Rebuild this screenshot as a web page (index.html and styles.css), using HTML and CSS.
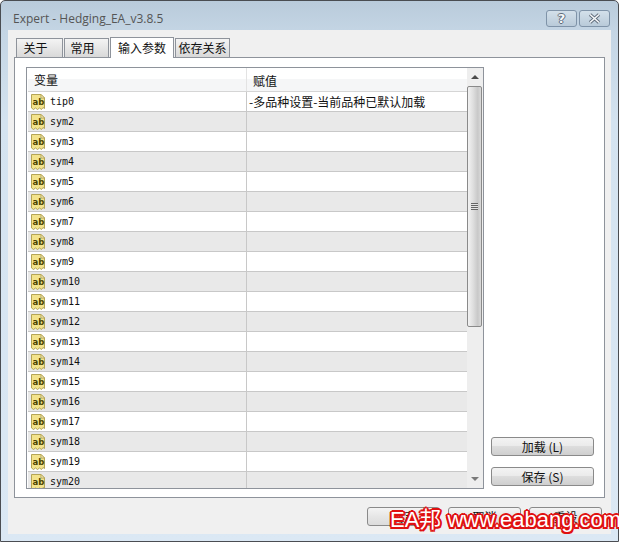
FILE: index.html
```html
<!DOCTYPE html>
<html lang="zh-CN">
<head>
    <meta charset="UTF-8">
    <meta name="viewport" content="width=device-width, initial-scale=1.0">
    <title>Expert - Hedging_EA_v3.8.5</title>
    <link rel="stylesheet" href="styles.css">
</head>
<body>
    <svg class="defs" width="0" height="0">
        <symbol id="ab-icon" viewBox="0 0 16 18">
            <path d="M1.5 1.5H11L14.5 5V15.5L13 14.5L11.5 16.5L9.5 15L7.5 16.5L5.5 15L3.5 16.5L1.5 15Z" fill="#f3e38c" stroke="#b5a556"/>
            <path d="M11 1.5V5H14.5Z" fill="#fdf8d8" stroke="#b5a556"/>
            <text x="2.6" y="12" class="ab-text">ab</text>
        </symbol>
    </svg>

    <div class="window">
        <div class="titlebar">
            <span class="title">Expert - Hedging_EA_v3.8.5</span>
            <div class="caption-buttons">
                <div class="caption-btn"><span class="glyph">?</span></div>
                <div class="caption-btn">
                    <svg width="13" height="11" viewBox="0 0 13 11">
                        <path d="M2 1.5L11 9.5M11 1.5L2 9.5" fill="none" stroke="#5f6b7a" stroke-width="3.4"/>
                        <path d="M2 1.5L11 9.5M11 1.5L2 9.5" fill="none" stroke="#f6f8fa" stroke-width="1.6"/>
                    </svg>
                </div>
            </div>
        </div>

        <div class="client">
            <div class="tabs">
                <div class="tab tab-about">关于</div>
                <div class="tab tab-common">常用</div>
                <div class="tab tab-active">输入参数</div>
                <div class="tab tab-deps">依存关系</div>
            </div>

            <div class="panel">
                <div class="panel-main">
                    <div class="list">
                        <div class="list-body">
                            <div class="list-head">
                                <div class="col-name">变量</div>
                                <div class="col-value">赋值</div>
                            </div>
                            <div class="row"><div class="col-name"><svg class="icon"><use href="#ab-icon"/></svg>tip0</div><div class="col-value cjk">-多品种设置-当前品种已默认加载</div></div>
                            <div class="row"><div class="col-name"><svg class="icon"><use href="#ab-icon"/></svg>sym2</div><div class="col-value"></div></div>
                            <div class="row"><div class="col-name"><svg class="icon"><use href="#ab-icon"/></svg>sym3</div><div class="col-value"></div></div>
                            <div class="row"><div class="col-name"><svg class="icon"><use href="#ab-icon"/></svg>sym4</div><div class="col-value"></div></div>
                            <div class="row"><div class="col-name"><svg class="icon"><use href="#ab-icon"/></svg>sym5</div><div class="col-value"></div></div>
                            <div class="row"><div class="col-name"><svg class="icon"><use href="#ab-icon"/></svg>sym6</div><div class="col-value"></div></div>
                            <div class="row"><div class="col-name"><svg class="icon"><use href="#ab-icon"/></svg>sym7</div><div class="col-value"></div></div>
                            <div class="row"><div class="col-name"><svg class="icon"><use href="#ab-icon"/></svg>sym8</div><div class="col-value"></div></div>
                            <div class="row"><div class="col-name"><svg class="icon"><use href="#ab-icon"/></svg>sym9</div><div class="col-value"></div></div>
                            <div class="row"><div class="col-name"><svg class="icon"><use href="#ab-icon"/></svg>sym10</div><div class="col-value"></div></div>
                            <div class="row"><div class="col-name"><svg class="icon"><use href="#ab-icon"/></svg>sym11</div><div class="col-value"></div></div>
                            <div class="row"><div class="col-name"><svg class="icon"><use href="#ab-icon"/></svg>sym12</div><div class="col-value"></div></div>
                            <div class="row"><div class="col-name"><svg class="icon"><use href="#ab-icon"/></svg>sym13</div><div class="col-value"></div></div>
                            <div class="row"><div class="col-name"><svg class="icon"><use href="#ab-icon"/></svg>sym14</div><div class="col-value"></div></div>
                            <div class="row"><div class="col-name"><svg class="icon"><use href="#ab-icon"/></svg>sym15</div><div class="col-value"></div></div>
                            <div class="row"><div class="col-name"><svg class="icon"><use href="#ab-icon"/></svg>sym16</div><div class="col-value"></div></div>
                            <div class="row"><div class="col-name"><svg class="icon"><use href="#ab-icon"/></svg>sym17</div><div class="col-value"></div></div>
                            <div class="row"><div class="col-name"><svg class="icon"><use href="#ab-icon"/></svg>sym18</div><div class="col-value"></div></div>
                            <div class="row"><div class="col-name"><svg class="icon"><use href="#ab-icon"/></svg>sym19</div><div class="col-value"></div></div>
                            <div class="row"><div class="col-name"><svg class="icon"><use href="#ab-icon"/></svg>sym20</div><div class="col-value"></div></div>
                        </div>
                        <div class="scrollbar">
                            <div class="scroll-arrow"><span class="arrow-up"></span></div>
                            <div class="scroll-thumb"><span class="grip"></span></div>
                            <div class="scroll-track"></div>
                            <div class="scroll-arrow"><span class="arrow-down"></span></div>
                        </div>
                    </div>
                </div>
                <div class="panel-side">
                    <button class="btn btn-side">加载 (L)</button>
                    <button class="btn btn-side">保存 (S)</button>
                </div>
            </div>

            <div class="footer">
                <button class="btn btn-foot">确定</button>
                <button class="btn btn-foot">取消</button>
                <button class="btn btn-foot">重设</button>
            </div>
        </div>

        <div class="watermark">EA邦 www.eabang.com</div>
    </div>
</body>
</html>
```

FILE: styles.css
```css
html, body {
    margin: 0;
    padding: 0;
}
body {
    width: 619px;
    height: 542px;
    overflow: hidden;
    font-family: "Noto Sans CJK SC", "Liberation Sans", sans-serif;
    font-size: 12px;
    color: #111;
}
.defs {
    display: block;
    height: 0;
}
.window {
    position: relative;
    box-sizing: border-box;
    width: 619px;
    height: 542px;
    padding: 0 7px 7px;
    border: 1px solid #4a4d52;
    border-radius: 5px 5px 0 0;
    background: linear-gradient(to bottom, #b9cbdb 0, #c4d5e4 30px, #d4e3f0 120px, #dbe8f4 100%);
}
.titlebar {
    display: flex;
    justify-content: space-between;
    height: 29px;
}
.title {
    margin: 9px 0 0 5px;
    font-family: "Open Sans", sans-serif;
    font-size: 12px;
    line-height: 17px;
    color: #555;
}
.caption-buttons {
    display: flex;
    gap: 2px;
    margin: 9px 1px 0 0;
}
.caption-btn {
    display: flex;
    align-items: center;
    justify-content: center;
    box-sizing: border-box;
    width: 31px;
    height: 17px;
    border: 1px solid #7f93a8;
    border-radius: 3px;
    background: linear-gradient(to bottom, #d3e0ea, #b9cad9);
}
.glyph {
    font-family: "DejaVu Sans", sans-serif;
    font-size: 13px;
    font-weight: bold;
    line-height: 15px;
    color: #f6f8fa;
    text-shadow: 1px 0 0 #5f6b7a, -1px 0 0 #5f6b7a, 0 1px 0 #5f6b7a, 0 -1px 0 #5f6b7a;
}
.client {
    display: flex;
    flex-direction: column;
    height: 504px;
    padding: 0 6px;
    box-sizing: border-box;
    background: #f0f0f0;
}

/* tabs */
.tabs {
    display: flex;
    align-items: flex-end;
    height: 27px;
    padding-left: 2px;
}
.tab {
    box-sizing: border-box;
    height: 19px;
    margin-right: 1px;
    border: 1px solid #8e939b;
    border-bottom: none;
    background: linear-gradient(to bottom, #f4f4f4, #d9d9d9);
    font-size: 12px;
    line-height: 18px;
    text-align: center;
}
.tab-about {
    width: 47px;
    padding-right: 8px;
}
.tab-common {
    width: 45px;
    padding-right: 8px;
}
.tab-active {
    position: relative;
    z-index: 1;
    width: 64px;
    height: 21px;
    margin-bottom: -1px;
    background: #fff;
    line-height: 19px;
}
.tab-deps {
    width: 55px;
}
.panel {
    display: flex;
    box-sizing: border-box;
    width: 591px;
    height: 441px;
    border: 1px solid #8e939b;
    background: #fff;
}
.panel-main {
    padding: 9px 0 0 11px;
}
.list {
    display: flex;
    box-sizing: border-box;
    width: 458px;
    height: 422px;
    border: 1px solid #8e939b;
    overflow: hidden;
}
.list-body {
    width: 439px;
    margin-left: 1px;
    overflow: hidden;
}
.list-head {
    display: flex;
    height: 23px;
    border-bottom: 1px solid #d5d5d5;
    background: linear-gradient(to bottom, #fff 50%, #f5f6f7 50%);
    font-size: 12px;
    line-height: 25px;
}
.list-head .col-name {
    border-right: 1px solid #e3e3e3;
    padding-left: 6px;
}
.list-head .col-value {
    padding-left: 6px;
}
.row {
    display: flex;
    box-sizing: border-box;
    height: 20px;
    border-bottom: 1px solid #c8c8c8;
    background: #fff;
}
.row:nth-child(odd) {
    background: #e9e9e9;
}
.col-name {
    display: flex;
    align-items: center;
    box-sizing: border-box;
    width: 219px;
    border-right: 1px solid #c8c8c8;
    padding-left: 2px;
    font-family: "DejaVu Sans Mono", monospace;
    font-size: 10px;
}
.list-head .col-name,
.list-head .col-value {
    font-family: "Noto Sans CJK SC", sans-serif;
    font-size: 12px;
}
.col-value {
    flex: 1;
}
.cjk {
    padding-left: 2px;
    font-size: 12px;
    line-height: 19px;
}
.icon {
    flex: none;
    width: 16px;
    height: 18px;
    margin-right: 4px;
}
.ab-text {
    font-family: "DejaVu Sans", sans-serif;
    font-size: 8.5px;
    font-weight: bold;
    fill: #4a4200;
}

/* scrollbar */
.scrollbar {
    display: flex;
    flex-direction: column;
    flex: none;
    width: 16px;
    background: #eeeeee;
}
.scroll-arrow {
    display: flex;
    align-items: center;
    justify-content: center;
    height: 18px;
    flex: none;
}
.arrow-up {
    border: 4px solid transparent;
    border-top: none;
    border-bottom-color: #4a4a4a;
}
.arrow-down {
    border: 4px solid transparent;
    border-bottom: none;
    border-top-color: #7a7a7a;
}
.scroll-thumb {
    display: flex;
    align-items: center;
    justify-content: center;
    box-sizing: border-box;
    width: 15px;
    height: 241px;
    flex: none;
    border: 1px solid #8a8a8a;
    border-radius: 2px;
    background: linear-gradient(to right, #f2f2f2, #dedede 40%, #c8c8c8 75%, #dadada);
}
.grip {
    width: 7px;
    height: 7px;
    background: repeating-linear-gradient(to bottom, #666 0, #666 1px, #e4e4e4 1px, #e4e4e4 2px);
}
.scroll-track {
    flex: 1;
}

/* buttons */
.btn {
    box-sizing: border-box;
    padding: 0;
    border: 1px solid #8a8a8a;
    border-radius: 3px;
    background: linear-gradient(to bottom, #f3f3f3 0, #ebebeb 45%, #dddddd 50%, #cfcfcf 100%);
    font-family: "Noto Sans CJK SC", sans-serif;
    font-size: 12px;
    color: #111;
}
.panel-side {
    display: flex;
    flex-direction: column;
    gap: 11px;
    padding: 379px 0 0 7px;
}
.btn-side {
    width: 103px;
    height: 19px;
    line-height: 17px;
}
.footer {
    display: flex;
    justify-content: flex-end;
    gap: 8px;
    padding: 9px 3px 0 0;
}
.btn-foot {
    width: 73px;
    height: 19px;
    background: linear-gradient(to bottom, #f4f4f4, #e6e6e6 50%, #dcdcdc);
}

/* site stamp over the dialog */
.watermark {
    position: absolute;
    left: 389px;
    top: 505px;
    font-family: "Liberation Sans", "Noto Sans CJK SC", sans-serif;
    font-size: 22px;
    line-height: 28px;
    white-space: nowrap;
    color: #fff;
    text-shadow: 2px 0 0 #e01010, -2px 0 0 #e01010, 0 2px 0 #e01010, 0 -2px 0 #e01010,
        1.5px 1.5px 0 #e01010, -1.5px 1.5px 0 #e01010, 1.5px -1.5px 0 #e01010, -1.5px -1.5px 0 #e01010;
}
```
